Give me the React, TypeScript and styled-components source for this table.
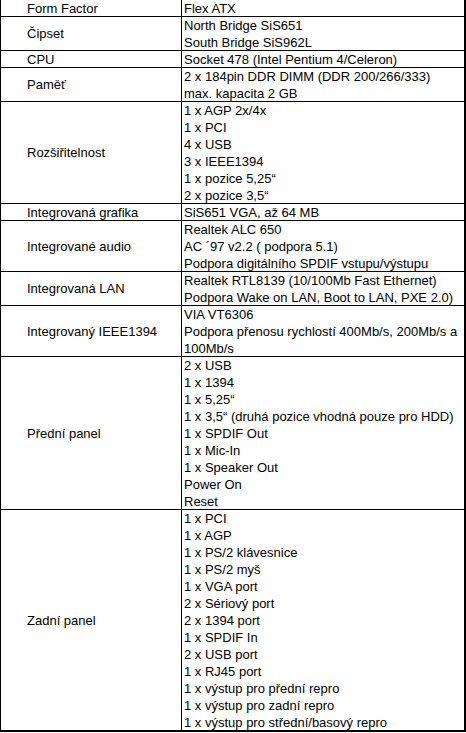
import React from "react";
import styled, { createGlobalStyle } from "styled-components";

const GlobalStyle = createGlobalStyle`
  html, body { margin: 0; padding: 0; background: #ffffff; }
  body { font-family: "Liberation Sans", Arial, sans-serif; }
`;

const Table = styled.div`
  width: 466px;
  box-sizing: border-box;
  display: grid;
  grid-template-columns: 180px 1fr;
  column-gap: 1px;
  row-gap: 1px;
  background: #000000;
  border-left: 1px solid #000000;
  border-right: 2px solid #000000;
  border-bottom: 2px solid #000000;
  font-family: "Liberation Sans", Arial, sans-serif;
  font-size: 13px;
  line-height: 17px;
  color: #000000;
`;

const LabelCell = styled.div<{ $lines: number; $first?: boolean }>`
  background: #ffffff;
  height: ${(p) => (p.$first ? 16 : p.$lines * 17 - 1)}px;
  display: flex;
  align-items: center;
  padding-left: 26px;
  white-space: nowrap;
  overflow: hidden;
`;

const ValueCell = styled.div<{ $lines: number; $first?: boolean }>`
  background: #ffffff;
  height: ${(p) => (p.$first ? 16 : p.$lines * 17 - 1)}px;
  padding-left: 2px;
  padding-right: 4px;
  display: flex;
  flex-direction: column;
  overflow: visible;
`;

const Line = styled.div`
  height: 17px;
  white-space: nowrap;
`;

type Row = { label: string; values: string[] };

const rows: Row[] = [
  { label: "Form Factor", values: ["Flex ATX"] },
  { label: "Čipset", values: ["North Bridge SiS651", "South Bridge SiS962L"] },
  { label: "CPU", values: ["Socket 478 (Intel Pentium 4/Celeron)"] },
  {
    label: "Paměť",
    values: ["2 x 184pin DDR DIMM (DDR 200/266/333)", "max. kapacita 2 GB"],
  },
  {
    label: "Rozšiřitelnost",
    values: [
      "1 x AGP 2x/4x",
      "1 x PCI",
      "4 x USB",
      "3 x IEEE1394",
      "1 x pozice 5,25“",
      "2 x pozice 3,5“",
    ],
  },
  { label: "Integrovaná grafika", values: ["SiS651 VGA, až 64 MB"] },
  {
    label: "Integrované audio",
    values: [
      "Realtek ALC 650",
      "AC ´97 v2.2 ( podpora 5.1)",
      "Podpora digitálního SPDIF vstupu/výstupu",
    ],
  },
  {
    label: "Integrovaná LAN",
    values: [
      "Realtek RTL8139 (10/100Mb Fast Ethernet)",
      "Podpora Wake on LAN, Boot to LAN, PXE 2.0)",
    ],
  },
  {
    label: "Integrovaný IEEE1394",
    values: [
      "VIA VT6306",
      "Podpora přenosu rychlostí 400Mb/s, 200Mb/s a",
      "100Mb/s",
    ],
  },
  {
    label: "Přední panel",
    values: [
      "2 x USB",
      "1 x 1394",
      "1 x 5,25“",
      "1 x 3,5“ (druhá pozice vhodná pouze pro HDD)",
      "1 x SPDIF Out",
      "1 x Mic-In",
      "1 x Speaker Out",
      "Power On",
      "Reset",
    ],
  },
  {
    label: "Zadní panel",
    values: [
      "1 x PCI",
      "1 x AGP",
      "1 x PS/2 klávesnice",
      "1 x PS/2 myš",
      "1 x VGA port",
      "2 x Sériový port",
      "2 x 1394 port",
      "1 x SPDIF In",
      "2 x USB port",
      "1 x RJ45 port",
      "1 x výstup pro přední repro",
      "1 x výstup pro zadní repro",
      "1 x výstup pro střední/basový repro",
    ],
  },
];

export default function App() {
  return (
    <>
      <GlobalStyle />
      <Table>
        {rows.map((r, i) => (
          <React.Fragment key={r.label}>
            <LabelCell $lines={r.values.length} $first={i === 0}>
              {r.label}
            </LabelCell>
            <ValueCell $lines={r.values.length} $first={i === 0}>
              {r.values.map((v) => (
                <Line key={v}>{v}</Line>
              ))}
            </ValueCell>
          </React.Fragment>
        ))}
      </Table>
    </>
  );
}
